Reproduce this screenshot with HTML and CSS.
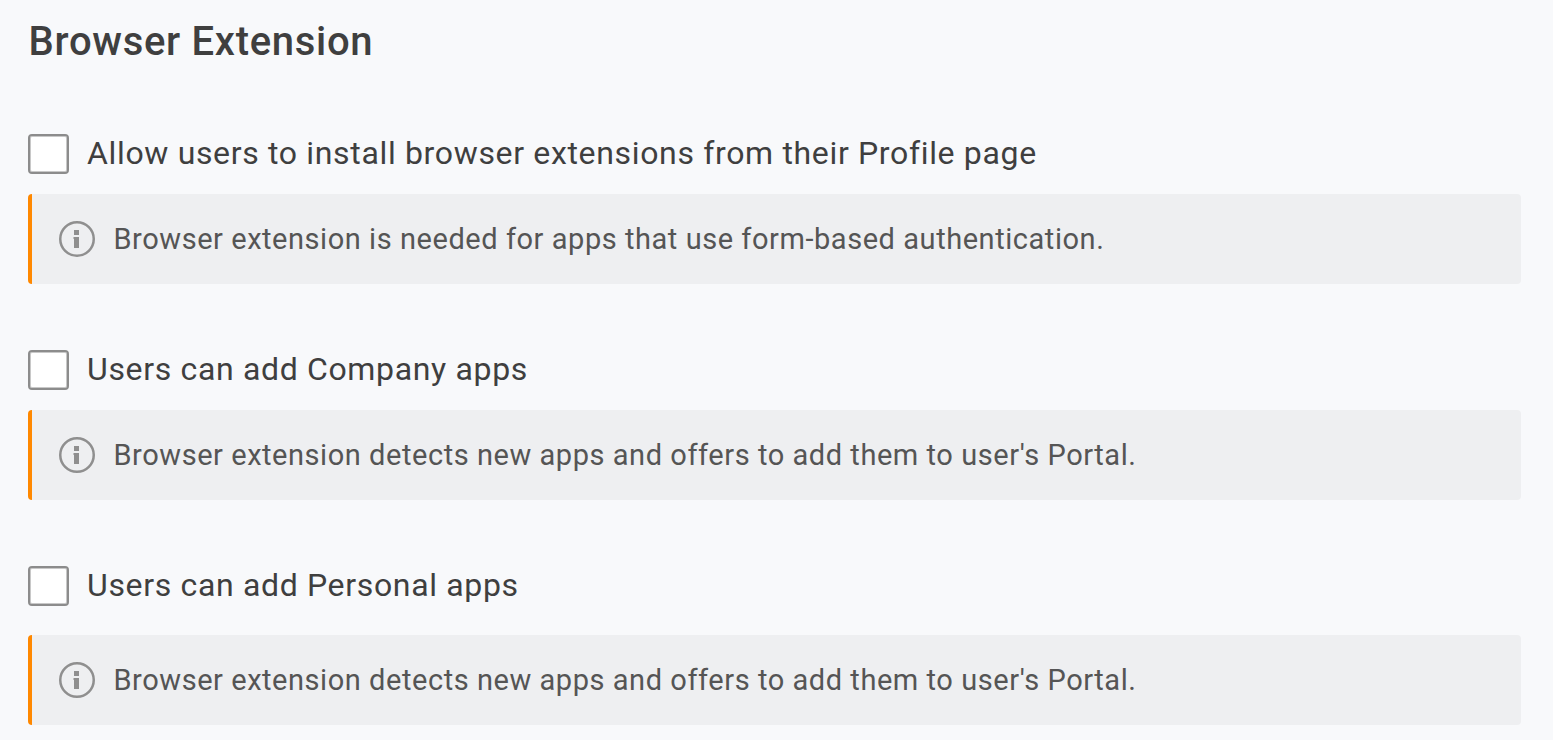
FILE: index.html
```html
<!DOCTYPE html>
<html lang="en">
<head>
<meta charset="utf-8">
<title>Browser Extension</title>
<link rel="stylesheet" href="styles.css">
</head>
<body>
<main class="page">
<h1 class="title">Browser Extension</h1>
<section class="setting">
<label class="check"><span class="box"></span><span class="label">Allow users to install browser extensions from their Profile page</span></label>
<div class="note"><svg class="info" viewBox="0 0 36 36"><circle cx="18" cy="18" r="16.750" fill="none" stroke="#8f8f8f" stroke-width="2.500"/><path d="M15 9h5v5h-5zM14.500 16h5.500v11h-5v-9h-.5z" fill="#8f8f8f"/></svg><span>Browser extension is needed for apps that use form-based authentication.</span></div>
</section>
<section class="setting">
<label class="check"><span class="box"></span><span class="label">Users can add Company apps</span></label>
<div class="note"><svg class="info" viewBox="0 0 36 36"><circle cx="18" cy="18" r="16.750" fill="none" stroke="#8f8f8f" stroke-width="2.500"/><path d="M15 9h5v5h-5zM14.500 16h5.500v11h-5v-9h-.5z" fill="#8f8f8f"/></svg><span>Browser extension detects new apps and offers to add them to user's Portal.</span></div>
</section>
<section class="setting">
<label class="check check-wide"><span class="box"></span><span class="label">Users can add Personal apps</span></label>
<div class="note"><svg class="info" viewBox="0 0 36 36"><circle cx="18" cy="18" r="16.750" fill="none" stroke="#8f8f8f" stroke-width="2.500"/><path d="M15 9h5v5h-5zM14.500 16h5.500v11h-5v-9h-.5z" fill="#8f8f8f"/></svg><span>Browser extension detects new apps and offers to add them to user's Portal.</span></div>
</section>
</main>
</body>
</html>
```

FILE: styles.css
```css
html, body { margin: 0; padding: 0; }
body { background: #f8f9fb; font-family: Roboto, sans-serif; color: #3f3f3f; overflow: hidden; height: 740px; }
.page { padding: 0 32px 0 28px; }
.title { margin: 0; padding: 19px 0 0 0.6px; height: 134px; box-sizing: border-box; font-size: 40px; line-height: 46px; font-weight: 500; letter-spacing: 0.7px; }
.setting { margin-bottom: 66px; }
.setting:last-child { margin-bottom: 0; }
.check { display: flex; align-items: center; gap: 18px; height: 40px; margin-bottom: 20px; }
.check-wide { margin-bottom: 29px; }
.box { width: 37px; height: 36px; border: 2px solid #8c8c8c; border-radius: 4px; background: #fff; box-shadow: inset 0 0 0 1px #c8c8c8; flex: none; box-sizing: content-box; }
.label { font-size: 32px; letter-spacing: 0.66px; margin-bottom: 2px; }
.note { display: flex; align-items: center; gap: 18.500px; height: 90px; padding-left: 27px; box-sizing: border-box; background: #eeeff1; border-left: 4px solid #ff8800; border-radius: 4px; font-size: 29px; letter-spacing: 0.55px; color: #555; }
.info { width: 36px; height: 36px; flex: none; }
```
